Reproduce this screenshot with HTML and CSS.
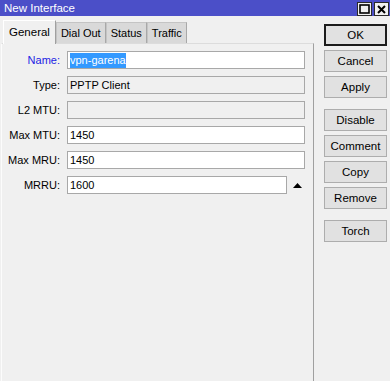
FILE: index.html
```html
<!DOCTYPE html>
<html lang="en">
<head>
  <meta charset="UTF-8" />
  <title>New Interface</title>
  <link rel="stylesheet" href="styles.css">
</head>
<body>
  <div class="window">
    <div class="titlebar">
      <span class="title">New Interface</span>
      <div class="win-controls">
        <button class="win-btn" aria-label="Maximize">
          <svg width="11" height="10" viewBox="0 0 11 10"><rect x="1" y="1" width="9" height="8" fill="none" stroke="#000" stroke-width="1.6"/></svg>
        </button>
        <button class="win-btn" aria-label="Close">
          <svg width="9" height="9" viewBox="0 0 9 9"><path d="M1 1 L8 8 M8 1 L1 8" stroke="#000" stroke-width="2"/></svg>
        </button>
      </div>
    </div>

    <div class="main">
      <div class="tab-area">
        <div class="tabs">
          <div class="tab active">General</div>
          <div class="tab">Dial Out</div>
          <div class="tab">Status</div>
          <div class="tab">Traffic</div>
        </div>

        <div class="panel">
          <div class="field-row">
            <label class="field-label accent">Name:</label>
            <div class="field"><span class="selected">vpn-garena</span></div>
          </div>
          <div class="field-row">
            <label class="field-label">Type:</label>
            <div class="field readonly">PPTP Client</div>
          </div>
          <div class="field-row">
            <label class="field-label">L2 MTU:</label>
            <div class="field readonly"></div>
          </div>
          <div class="field-row">
            <label class="field-label">Max MTU:</label>
            <div class="field">1450</div>
          </div>
          <div class="field-row">
            <label class="field-label">Max MRU:</label>
            <div class="field">1450</div>
          </div>
          <div class="field-row">
            <label class="field-label">MRRU:</label>
            <div class="field short">1600</div>
            <svg class="spin-arrow" width="9" height="5" viewBox="0 0 9 5"><polygon points="4.5,0 9,5 0,5" fill="#000"/></svg>
          </div>
        </div>
      </div>

      <div class="actions">
        <button class="btn default">OK</button>
        <button class="btn">Cancel</button>
        <button class="btn">Apply</button>
        <button class="btn spaced">Disable</button>
        <button class="btn">Comment</button>
        <button class="btn">Copy</button>
        <button class="btn">Remove</button>
        <button class="btn spaced">Torch</button>
      </div>
    </div>
  </div>
</body>
</html>
```

FILE: styles.css
```css
html, body {
  margin: 0;
  padding: 0;
  background: #f0f0f0;
  font-family: "Liberation Sans", Arial, sans-serif;
  font-size: 11px;
  color: #000;
}

.window {
  height: 381px;
  display: flex;
  flex-direction: column;
  overflow: hidden;
}

.titlebar {
  height: 16px;
  flex: 0 0 16px;
  background: #4b4fc8;
  color: #fff;
  display: flex;
  justify-content: space-between;
  padding: 0 1px 0 4px;
}

.title {
  line-height: 17px;
  font-size: 11.5px;
}

.win-controls {
  display: flex;
  gap: 2px;
  margin-top: 2px;
}

.win-btn {
  width: 15px;
  height: 14px;
  padding: 0;
  border: 1px solid #2a2a2a;
  background: #f0f0f0;
  display: flex;
  align-items: center;
  justify-content: center;
}

.main {
  flex: 1;
  display: flex;
}

.tab-area {
  width: 313px;
  margin-left: 1px;
  display: flex;
  flex-direction: column;
}

.tabs {
  height: 27px;
  flex: 0 0 27px;
  display: flex;
  align-items: flex-end;
  padding-left: 2px;
  position: relative;
  z-index: 1;
}

.tab {
  height: 20px;
  line-height: 20px;
  padding: 0 4px;
  background: #d9d9d9;
  border: 1px solid #c4c4c4;
  border-bottom: none;
  border-right-color: #a8a8a8;
}

.tab.active {
  height: 23px;
  line-height: 22px;
  margin-bottom: -1px;
  background: #f0f0f0;
  border-color: #fff;
  border-right-color: #a0a0a0;
  padding: 0 5px 0 5px;
  font-size: 11.5px;
}

.panel {
  flex: 1;
  border-top: 1px solid #dcdcdc;
  border-left: 1px solid #fcfcfc;
  border-right: 1px solid #a0a0a0;
  padding-top: 7px;
}

.field-row {
  display: flex;
  align-items: center;
  gap: 7px;
  height: 18px;
  margin-bottom: 7px;
}

.field-label {
  width: 58px;
  text-align: right;
}

.field-label.accent {
  color: #2222e4;
}

.field {
  box-sizing: border-box;
  width: 238px;
  height: 18px;
  border: 1px solid #a8a8a8;
  background: #fff;
  padding-left: 2px;
  line-height: 16px;
  display: flex;
  align-items: center;
}

.field.readonly {
  background: #f0f0f0;
}

.field.short {
  width: 220px;
}

.selected {
  background: #3399ff;
  color: #fff;
  line-height: 15px;
}

.spin-arrow {
  margin-left: -1px;
}

.actions {
  width: 63px;
  margin-left: 10px;
  padding-top: 8px;
  display: flex;
  flex-direction: column;
  gap: 4px;
}

.btn {
  height: 22px;
  padding: 0;
  border: 1px solid #adadad;
  background: #e1e1e1;
  font-family: inherit;
  font-size: 11.5px;
  color: #000;
}

.btn.default {
  border: 2px solid #1c1c1c;
}

.btn.spaced {
  margin-top: 7px;
}
```
